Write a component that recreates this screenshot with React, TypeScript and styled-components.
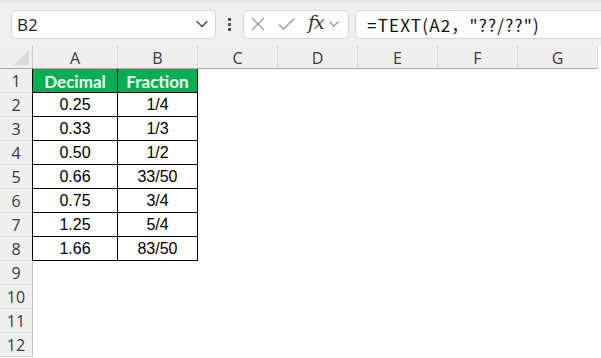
import React from "react";
import styled, { createGlobalStyle } from "styled-components";

const Global = createGlobalStyle`
  html, body { margin: 0; padding: 0; background: #ffffff; overflow: hidden; }
  #root { width: 601px; height: 358px; overflow: hidden; }
`;

const Page = styled.div`
  width: 601px;
  height: 358px;
  display: flex;
  flex-direction: column;
  background: #ffffff;
  font-family: "Open Sans", "Noto Sans", sans-serif;
`;

const FormulaBar = styled.div`
  height: 46px;
  flex: none;
  display: flex;
  align-items: center;
  background: linear-gradient(#e2e2e2 0px, #eeeeee 4px, #f0f0f0 6px);
  padding: 2px 0 0 11px;
  box-sizing: border-box;
`;

const Box = styled.div`
  height: 29px;
  box-sizing: border-box;
  background: #ffffff;
  border: 1px solid #d6d6d6;
  border-radius: 5px;
  display: flex;
  align-items: center;
`;

const NameBox = styled(Box)`
  width: 205px;
  padding: 0 6px 0 5px;
  justify-content: space-between;
  font-size: 17px;
  color: #222;
`;

const Dots = styled.div`
  width: 27px;
  display: flex;
  flex-direction: column;
  align-items: center;
  gap: 2px;
  span {
    width: 3px;
    height: 3px;
    background: #555;
  }
`;

const ActionBox = styled(Box)`
  width: 106px;
  padding: 0 0 0 7px;
`;

const Fx = styled.span`
  font-family: "DejaVu Serif", "Liberation Serif", serif;
  font-style: italic;
  font-size: 19px;
  color: #333;
  margin-left: 12px;
  letter-spacing: -1px;
  line-height: 1;
  margin-top: -3px;
`;

const FormulaInput = styled(Box)`
  flex: 1;
  margin-left: 6px;
  margin-right: -10px;
  padding-left: 11px;
  font-family: "Noto Sans CJK SC", "Noto Sans", sans-serif;
  font-size: 17px;
  letter-spacing: 1.2px;
  color: #111;
  white-space: pre;
`;

const Grid = styled.div`
  display: grid;
  grid-template-columns: 33px 85px 80px 80px 80px 80px 80px 80px;
  grid-template-rows: 23px repeat(12, 24px);
  background: #ffffff;
`;

const Corner = styled.div`
  background: #efefef;
  border-right: 1px solid #c8c8c8;
  border-bottom: 1px solid #a8a8a8;
  box-sizing: border-box;
  position: relative;
  &::after {
    content: "";
    position: absolute;
    right: 3px;
    bottom: 3px;
    width: 0;
    height: 0;
    border-left: 15px solid transparent;
    border-bottom: 15px solid #dadada;
  }
`;

const ColHead = styled.div`
  background: #efefef;
  border-right: 1px solid #d8d8d8;
  border-bottom: 1px solid #a8a8a8;
  box-sizing: border-box;
  display: flex;
  align-items: center;
  justify-content: center;
  font-size: 16px;
  color: #3a3a3a;
  padding-top: 1px;
`;

const RowHead = styled.div`
  background: #efefef;
  border-right: 1px solid #c0c0c0;
  border-bottom: 1px solid #dcdcdc;
  box-sizing: border-box;
  display: flex;
  align-items: center;
  justify-content: center;
  font-size: 16px;
  color: #3a3a3a;
`;

const Cell = styled.div<{ $head?: boolean; $bordered?: boolean; $first?: boolean }>`
  box-sizing: border-box;
  display: flex;
  align-items: center;
  justify-content: center;
  background: ${(p) => (p.$head ? "#00b050" : "#ffffff")};
  color: ${(p) => (p.$head ? "#ffffff" : "#000000")};
  font-family: ${(p) =>
    p.$head ? '"Lato", "Liberation Sans", sans-serif' : '"Liberation Sans", Arial, sans-serif'};
  font-weight: ${(p) => (p.$head ? 700 : 400)};
  font-size: ${(p) => (p.$head ? "17px" : "16px")};
  border-right: ${(p) => (p.$bordered ? "1px solid #000" : "none")};
  border-bottom: ${(p) => (p.$bordered ? "1px solid #000" : "none")};
  margin-left: ${(p) => (p.$first ? "-1px" : "0")};
  border-left: ${(p) => (p.$first ? "1px solid #000" : "none")};
  padding-top: 1px;
`;

const cols = ["A", "B", "C", "D", "E", "F", "G"];
const data: [string, string][] = [
  ["Decimal", "Fraction"],
  ["0.25", "1/4"],
  ["0.33", "1/3"],
  ["0.50", "1/2"],
  ["0.66", "33/50"],
  ["0.75", "3/4"],
  ["1.25", "5/4"],
  ["1.66", "83/50"],
];

const Chevron = ({ color = "#444", size = 14 }: { color?: string; size?: number }) => (
  <svg width={size} height={size} viewBox="0 0 14 14" fill="none">
    <path d="M2 4.5 L7 9.5 L12 4.5" stroke={color} strokeWidth="1.3" strokeLinecap="round" strokeLinejoin="round" />
  </svg>
);

export default function App() {
  return (
    <Page>
      <Global />
      <FormulaBar>
        <NameBox>
          <span>B2</span>
          <Chevron />
        </NameBox>
        <Dots>
          <span />
          <span />
          <span />
        </Dots>
        <ActionBox>
          <svg width="14" height="14" viewBox="0 0 14 14">
            <path d="M1 1 L13 13 M13 1 L1 13" stroke="#9a9a9a" strokeWidth="1.3" />
          </svg>
          <svg width="18" height="14" viewBox="0 0 18 14" style={{ marginLeft: 13 }}>
            <path d="M1 7.5 L5.5 12 L16.5 1.5" stroke="#9a9a9a" strokeWidth="1.3" fill="none" />
          </svg>
          <Fx>fx</Fx>
          <span style={{ marginLeft: 4, display: "flex" }}>
            <Chevron color="#888" size={12} />
          </span>
        </ActionBox>
        <FormulaInput>{'=TEXT(A2，"??/??")'}</FormulaInput>
      </FormulaBar>
      <Grid>
        <Corner />
        {cols.map((c) => (
          <ColHead key={c}>{c}</ColHead>
        ))}
        {Array.from({ length: 12 }, (_, r) => (
          <React.Fragment key={r}>
            <RowHead>{r + 1}</RowHead>
            {cols.map((c, ci) => {
              const row = data[r];
              if (row && ci < 2) {
                return (
                  <Cell key={c} $head={r === 0} $bordered $first={ci === 0}>
                    {row[ci]}
                  </Cell>
                );
              }
              return <Cell key={c} />;
            })}
          </React.Fragment>
        ))}
      </Grid>
    </Page>
  );
}
